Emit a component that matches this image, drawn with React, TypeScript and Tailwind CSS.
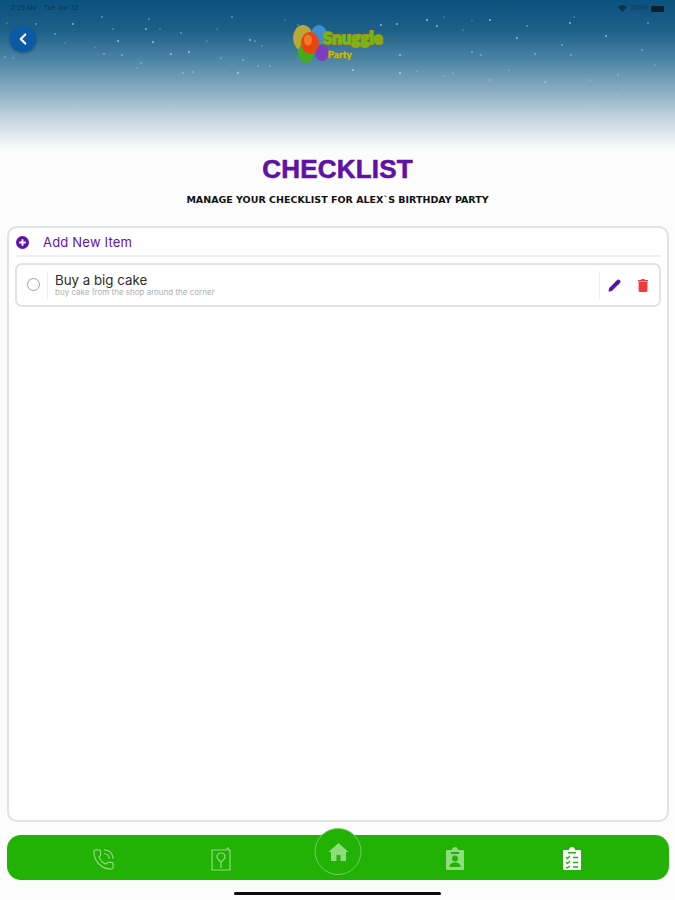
import { ChevronLeft, Pencil, PhoneCall } from "lucide-react";

const STARS: Array<[number, number, number]> = [
  [102, 17, 0.8], [149, 19, 0.8], [232, 17, 0.8], [285, 20, 0.6], [298, 25, 0.7],
  [381, 25, 0.9], [397, 24, 0.9], [427, 20, 1.1], [437, 26, 0.9], [444, 17, 0.6], [472, 21, 0.5],
  [490, 20, 0.9], [527, 26, 0.8], [570, 23, 0.9], [574, 17, 0.6], [648, 23, 0.8], [7, 23, 0.6], [36, 24, 0.8],
  [73, 24, 0.9], [113, 29, 0.7], [146, 29, 0.9], [160, 29, 0.6], [181, 33, 0.8], [217, 29, 0.6], [250, 40, 0.9],
  [255, 41, 0.7], [262, 46, 0.6], [55, 34, 0.8], [65, 43, 0.6], [118, 41, 0.9], [153, 42, 0.9], [207, 41, 0.6],
  [463, 30, 0.6], [517, 38, 0.9], [562, 45, 0.8], [606, 36, 0.9], [642, 50, 0.8], [472, 52, 0.8], [481, 55, 0.7],
  [535, 54, 0.8], [571, 55, 0.8], [400, 55, 0.9], [95, 47, 0.6], [104, 54, 0.8], [122, 55, 0.8], [171, 54, 0.9],
  [189, 52, 0.9], [221, 58, 0.7], [243, 60, 0.8], [232, 64, 0.6], [5, 57, 0.7], [13, 58, 0.6], [258, 66, 0.7],
  [270, 66, 0.7], [141, 63, 0.7], [137, 68, 0.6], [183, 73, 0.7], [193, 72, 0.7], [238, 73, 0.9], [353, 70, 0.9],
  [400, 73, 0.9], [417, 71, 0.6], [444, 76, 0.6], [453, 73, 0.6], [490, 80, 0.7], [509, 70, 0.6], [545, 82, 0.7],
  [590, 80, 0.6], [618, 75, 0.7], [655, 65, 0.6], [40, 103, 0.6], [57, 115, 0.6], [75, 110, 0.7], [175, 104, 0.6],
  [174, 93, 0.6], [592, 108, 0.5], [618, 95, 0.6],
];

function Logo() {
  return (
    <div className="relative h-[46px] w-[92px] blur-[0.6px]">
      <svg viewBox="0 0 92 46" className="absolute inset-0 h-full w-full">
        <ellipse cx="10" cy="16" rx="10" ry="13" fill="#b9a73a" />
        <ellipse cx="26" cy="13" rx="8" ry="10" fill="#3f8fd0" />
        <ellipse cx="13" cy="31" rx="8" ry="10" fill="#3fae1c" />
        <ellipse cx="29" cy="31" rx="6.5" ry="8" fill="#7f3cc2" />
        <ellipse cx="17" cy="21" rx="9" ry="11" fill="#e8460f" />
        <ellipse cx="15" cy="18" rx="4" ry="5.5" fill="#f4792b" />
      </svg>
      <span className="absolute left-[30px] top-[7px] font-['Lato',sans-serif] text-[17px] leading-[18px] font-black text-[#62c40c] [-webkit-text-stroke:2px_#ad8f1c] [paint-order:stroke_fill]">
        Snuggle
      </span>
      <span className="absolute left-[35px] top-[26px] font-['Lato',sans-serif] text-[10px] leading-[12px] font-black text-[#c4c01c] [-webkit-text-stroke:1px_#9b8a1a] [paint-order:stroke_fill]">
        Party
      </span>
    </div>
  );
}

function Header() {
  return (
    <header className="relative h-[150px] shrink-0 bg-[linear-gradient(to_bottom,#0c5280_0%,#1c6088_20%,#5288a8_42%,#8fb0c5_62%,#c6d6e0_80%,#fcfcfc_100%)]">
      <svg viewBox="0 0 675 150" className="absolute inset-0 h-full w-full blur-[0.4px]">
        {STARS.map(([x, y, r]) => (
          <circle key={`${x}-${y}`} cx={x} cy={y} r={r} fill="#ffffff" fillOpacity={y > 85 ? 0.3 : 0.6} />
        ))}
      </svg>
      <div className="relative flex h-[16px] items-center justify-between px-[11px] pt-[1px] font-['Liberation_Sans',sans-serif] text-[7px] text-[#0d3350] blur-[0.5px]">
        <div className="flex gap-[7px]">
          <span>2:15 AM</span>
          <span>Tue Jun 22</span>
        </div>
        <div className="flex items-center gap-[3px]">
          <svg viewBox="0 0 10 8" className="h-[7px] w-[9px]">
            <path d="M0 2.5 C3 -0.5 7 -0.5 10 2.5 L5 8 Z" fill="#0d3350" />
          </svg>
          <span>100%</span>
          <span className="h-[6px] w-[13px] rounded-[1px] bg-[#0a1e2e]" />
        </div>
      </div>
      <div className="relative">
        <button className="absolute top-[10px] left-[10px] flex h-[26px] w-[26px] items-center justify-center rounded-full bg-[#0b5aa6] shadow-[0_1px_3px_rgba(0,40,80,0.5)]">
          <ChevronLeft className="h-[18px] w-[18px] text-white" strokeWidth={3} />
        </button>
        <div className="flex justify-center pt-[6px]">
          <div className="ml-[3px]">
            <Logo />
          </div>
        </div>
      </div>
    </header>
  );
}

function ItemRow() {
  return (
    <div className="flex h-[44px] items-center rounded-[7px] border-2 border-[#e3e3e3] bg-white">
      <div className="flex w-[30px] justify-center self-stretch">
        <span className="mt-[13px] ml-[2px] h-[13px] w-[13px] rounded-full border-[1.5px] border-[#a0a0a0]" />
      </div>
      <div className="my-[6px] w-px self-stretch bg-[#efefef]" />
      <div className="ml-[7px] flex min-w-0 flex-1 flex-col font-['Inter',sans-serif]">
        <span className="text-[13.3px] leading-[15px] text-[#2b2b2b]">Buy a big cake</span>
        <span className="text-[8px] leading-[9px] text-[#b0b0b0]">buy cake from the shop around the corner</span>
      </div>
      <div className="my-[6px] w-px self-stretch bg-[#efefef]" />
      <div className="flex w-[59px] items-center pl-[8px]">
        <Pencil className="h-[13px] w-[13px] fill-[#5f12a8] text-[#5f12a8]" strokeWidth={2} />
        <svg viewBox="0 0 10 13" className="ml-[17px] h-[13px] w-[10px]">
          <path d="M3.5 0 H6.5 L7 1 H10 V2.5 H0 V1 H3 Z M0.6 3 H9.4 V11.5 Q9.4 13 7.8 13 H2.2 Q0.6 13 0.6 11.5 Z" fill="#ef3b3b" />
        </svg>
      </div>
    </div>
  );
}

function NavBar() {
  return (
    <nav className="relative mt-[13px] mr-[6px] ml-[7px] grid h-[45px] shrink-0 grid-cols-5 items-center rounded-[14px] bg-[#22b105] px-[38px] text-[#8fdc7f]">
      <div className="flex justify-center">
        <PhoneCall className="mt-[3px] h-[23px] w-[23px]" strokeWidth={1.2} />
      </div>
      <div className="flex justify-center">
        <svg viewBox="0 0 20 24" className="mt-[2px] h-[24px] w-[20px]" fill="none" stroke="currentColor" strokeWidth="1.2">
          <path d="M1 3 H15 L17 1 L17.5 3 H19 V23 H1 Z" />
          <path d="M10 6 C13 6 14 8 14 10 C14 12 11 14 10 15 C9 14 6 12 6 10 C6 8 7 6 10 6 Z M10 15 V21" />
        </svg>
      </div>
      <div />
      <div className="flex justify-center">
        <svg viewBox="0 0 18 23" className="mt-[2px] h-[23px] w-[18px]" fill="currentColor">
          <path fillRule="evenodd" d="M1 3 H6 C6 1 7.5 0 9 0 C10.5 0 12 1 12 3 H17 Q18 3 18 4 V22 Q18 23 17 23 H1 Q0 23 0 22 V4 Q0 3 1 3 Z M5 5 V7 H13 V5 Z" />
          <circle cx="9" cy="11.5" r="3" fill="#22b105" />
          <path d="M3.5 20 C3.5 16.5 6 15.5 9 15.5 C12 15.5 14.5 16.5 14.5 20 Z" fill="#22b105" />
        </svg>
      </div>
      <div className="flex justify-center text-white">
        <svg viewBox="0 0 18 23" className="mt-[2px] h-[23px] w-[18px]" fill="currentColor">
          <path fillRule="evenodd" d="M1 3 H6 C6 1 7.5 0 9 0 C10.5 0 12 1 12 3 H17 Q18 3 18 4 V22 Q18 23 17 23 H1 Q0 23 0 22 V4 Q0 3 1 3 Z M5 5 V6.5 H13 V5 Z" />
          <g fill="none" stroke="#22b105" strokeWidth="1.3">
            <path d="M3 10 L4.5 11.5 L7 9 M3 15 L4.5 16.5 L7 14 M3 20 L4.5 21 L7 19" />
            <path d="M10 10.5 H15 M10 15.5 H15 M10 20 H15" />
          </g>
        </svg>
      </div>
      <div className="absolute top-[-7px] left-1/2 flex h-[47px] w-[47px] -translate-x-1/2 items-center justify-center rounded-full border border-[#6fd05c] bg-[#22b105]">
        <svg viewBox="0 0 20 18" className="h-[18px] w-[20px]" fill="currentColor">
          <path d="M10 0 L20 9 H17.5 V18 H12 V12 H8 V18 H2.5 V9 H0 Z" />
        </svg>
      </div>
    </nav>
  );
}

export default function App() {
  return (
    <div className="flex h-[900px] w-[675px] flex-col overflow-hidden bg-[#fcfcfc] font-['Inter',sans-serif]">
      <Header />
      <div className="flex flex-col items-center">
        <h1 className="mt-[3px] font-['Liberation_Sans',sans-serif] text-[26px] leading-[32px] font-bold tracking-[0.2px] text-[#5f12a8] [-webkit-text-stroke:0.6px_#5f12a8]">
          CHECKLIST
        </h1>
        <p className="mt-[8px] font-['DejaVu_Sans',sans-serif] text-[9.5px] leading-[14px] font-bold text-[#111111]">
          MANAGE YOUR CHECKLIST FOR ALEX`S BIRTHDAY PARTY
        </p>
      </div>
      <main className="mt-[19px] mr-[6px] ml-[7px] flex h-[596px] shrink-0 flex-col rounded-[10px] border-2 border-[#e2e2e2] bg-white px-[6px]">
        <div className="flex h-[29px] shrink-0 items-center border-b-2 border-[#efefef] pt-[2px] pl-[1px]">
          <svg viewBox="0 0 14 14" className="h-[13px] w-[13px]">
            <circle cx="7" cy="7" r="7" fill="#5f12a8" />
            <path d="M7 3.5 V10.5 M3.5 7 H10.5" stroke="#ffffff" strokeWidth="2" />
          </svg>
          <span className="ml-[14px] text-[13px] tracking-[0.2px] text-[#5f12a8]">Add New Item</span>
        </div>
        <div className="mt-[6px]">
          <ItemRow />
        </div>
      </main>
      <NavBar />
      <div className="mt-[12px] h-[3px] w-[207px] shrink-0 self-center rounded-full bg-[#0a0a0a]" />
    </div>
  );
}
